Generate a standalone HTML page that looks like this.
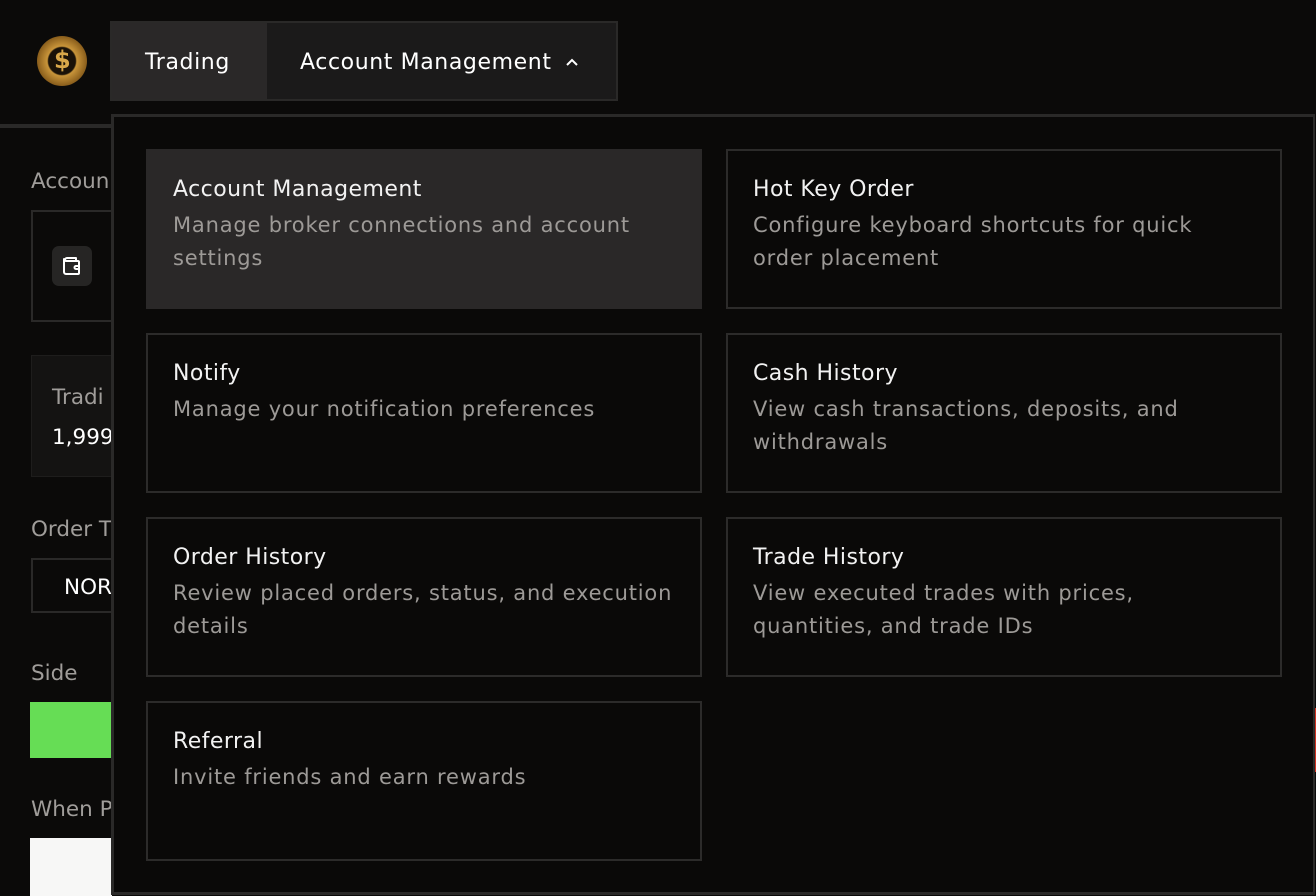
<!DOCTYPE html>
<html><head><style>
*{margin:0;padding:0;box-sizing:border-box}
body{width:1316px;height:896px;background:#0b0a09;font-family:"DejaVu Sans","Liberation Sans",sans-serif;position:relative;overflow:hidden;color:#fff}
.a{position:absolute}
.lbl{color:#a09d9a;font-size:21.5px}
.card{position:absolute;width:556px;height:160px;border:2px solid #2c2b2a;padding:26px 25px}
.card h3{font-size:22px;font-weight:normal;color:#f2f2f2;margin-top:0;letter-spacing:.45px}
.card p{font-size:21px;color:#9d9a97;line-height:33px;margin-top:7px;letter-spacing:.8px}
</style></head><body>
<div class="a" style="left:0;top:124px;width:111px;height:4px;background:#2a2928"></div>
<div class="a" style="left:37px;top:36px;width:50px;height:50px;border-radius:50%;background:radial-gradient(circle,#1a1208 38%,#c9953a 42%,#8a5e1c 70%,#d4a44a 100%)"></div>
<div class="a" style="left:54px;top:46px;color:#d9a84a;font-size:24px;font-weight:bold">$</div>
<div class="a lbl" style="left:31px;top:169px">Accoun</div>
<div class="a" style="left:31px;top:210px;width:90px;height:112px;border:2px solid #2a2928"></div>
<div class="a" style="left:52px;top:246px;width:40px;height:40px;background:#262524;border-radius:7px"></div>
<svg class="a" style="left:60px;top:254px" width="24" height="24" viewBox="0 0 24 24"><path d="M5 6a2 2 0 0 1 2-2h9v3M4 8v10a2 2 0 0 0 2 2h12a1 1 0 0 0 1-1V8a1 1 0 0 0-1-1H6a2 2 0 0 1-2-2v3" stroke="#fff" stroke-width="2" fill="none" stroke-linejoin="round"/><path d="M19 12h-3a1.5 1.5 0 0 0 0 3h3" stroke="#fff" stroke-width="2" fill="none"/></svg>
<div class="a" style="left:31px;top:355px;width:90px;height:122px;background:#141312;border:1px solid #1e1d1c"></div>
<div class="a lbl" style="left:52px;top:385px">Tradi</div>
<div class="a" style="left:52px;top:425px;font-size:21.5px">1,999</div>
<div class="a lbl" style="left:31px;top:517px">Order T</div>
<div class="a" style="left:31px;top:558px;width:90px;height:55px;border:2px solid #2a2928"></div>
<div class="a" style="left:64px;top:575px;font-size:21.5px">NOR</div>
<div class="a lbl" style="left:31px;top:661px">Side</div>
<div class="a" style="left:30px;top:702px;width:82px;height:56px;background:#66dd55"></div>
<div class="a lbl" style="left:31px;top:797px">When P</div>
<div class="a" style="left:30px;top:838px;width:82px;height:58px;background:#f7f7f6"></div>
<div class="a" style="left:1312px;top:708px;width:4px;height:64px;background:#d03020"></div>

<div class="a" style="left:110px;top:21px;width:508px;height:80px;border:2px solid #2a2928;background:#1b1a1a"></div>
<div class="a" style="left:112px;top:23px;width:155px;height:76px;background:#2a2828"></div>
<div class="a" style="left:145px;top:50px;font-size:22px;letter-spacing:.6px">Trading</div>
<div class="a" style="left:300px;top:50px;font-size:22px;letter-spacing:.6px">Account Management</div>
<svg class="a" style="left:565px;top:56px" width="14" height="12" viewBox="0 0 14 12"><path d="M2 9L7 4L12 9" stroke="#fff" stroke-width="2" fill="none"/></svg>

<div class="a" style="left:111px;top:114px;width:1204px;height:781px;background:#0a0908;border:3px solid #2a2928;border-right-width:2px"></div>
<div class="card" style="left:146px;top:149px;background:#2a2828;border-color:#2a2828"><h3>Account Management</h3><p>Manage broker connections and account settings</p></div>
<div class="card" style="left:726px;top:149px"><h3>Hot Key Order</h3><p>Configure keyboard shortcuts for quick order placement</p></div>
<div class="card" style="left:146px;top:333px"><h3>Notify</h3><p>Manage your notification preferences</p></div>
<div class="card" style="left:726px;top:333px"><h3>Cash History</h3><p>View cash transactions, deposits, and withdrawals</p></div>
<div class="card" style="left:146px;top:517px"><h3>Order History</h3><p>Review placed orders, status, and execution details</p></div>
<div class="card" style="left:726px;top:517px"><h3>Trade History</h3><p>View executed trades with prices, quantities, and trade IDs</p></div>
<div class="card" style="left:146px;top:701px"><h3>Referral</h3><p>Invite friends and earn rewards</p></div>
</body></html>
